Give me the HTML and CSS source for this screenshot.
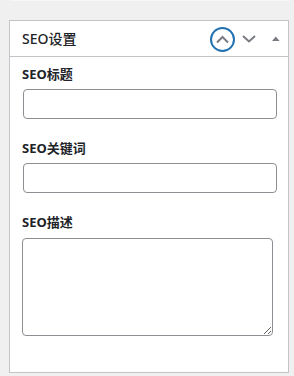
FILE: index.html
```html
<!DOCTYPE html>
<html lang="zh-CN">
<head>
<meta charset="utf-8">
<title>SEO设置</title>
<link rel="stylesheet" href="styles.css">
</head>
<body>
<div class="strip"></div>
<div class="postbox">
  <div class="postbox-header">
    <h2 class="hndle">SEO设置</h2>
    <div class="handle-actions">
      <button class="handle-btn" type="button" aria-label="上移">
        <svg width="26" height="35" viewBox="0 0 26 35"><circle cx="12.5" cy="18.5" r="11.5" fill="none" stroke="#2271b1" stroke-width="2"/><polyline points="7,21.5 12.5,16 18,21.5" fill="none" stroke="#787c82" stroke-width="2"/></svg>
      </button>
      <button class="handle-btn" type="button" aria-label="下移">
        <svg width="26" height="35" viewBox="0 0 26 35"><polyline points="7,15 13,20.5 19,15" fill="none" stroke="#787c82" stroke-width="2"/></svg>
      </button>
      <button class="handle-btn" type="button" aria-label="折叠">
        <svg width="26" height="35" viewBox="0 0 26 35"><polygon points="10,20 13.8,15.5 17.6,20" fill="#787c82"/></svg>
      </button>
    </div>
  </div>
  <div class="inside">
    <div class="field">
      <label class="field-label" for="seo-title">SEO标题</label>
      <input class="field-input" id="seo-title" type="text">
    </div>
    <div class="field">
      <label class="field-label" for="seo-keywords">SEO关键词</label>
      <input class="field-input" id="seo-keywords" type="text">
    </div>
    <div class="field">
      <label class="field-label" for="seo-desc">SEO描述</label>
      <textarea class="field-textarea" id="seo-desc"></textarea>
    </div>
  </div>
</div>
</body>
</html>
```

FILE: styles.css
```css
html, body {
  margin: 0;
  padding: 0;
}
body {
  background: #f0f0f1;
  font-family: "Noto Sans", "Noto Sans CJK SC", sans-serif;
  color: #1d2327;
}
.strip {
  margin-left: 10px;
  width: 280px;
  height: 1px;
  background: #f7f7f7;
}
.postbox {
  margin: 19px 0 0 9px;
  width: 278px;
  height: 351px;
  border: 1px solid #c3c4c7;
  background: #fff;
}
.postbox-header {
  height: 35px;
  border-bottom: 1px solid #c3c4c7;
  display: flex;
  align-items: center;
  justify-content: space-between;
}
.hndle {
  margin: 0;
  padding-left: 12px;
  font-size: 14px;
  font-weight: 500;
  line-height: 20px;
  color: #1d2327;
}
.handle-actions {
  display: flex;
  height: 35px;
}
.handle-btn {
  width: 26px;
  height: 35px;
  padding: 0;
  margin: 0;
  border: 0;
  background: transparent;
  display: block;
}
.handle-btn svg {
  display: block;
}
.inside {
  padding-top: 8px;
}
.field {
  margin-bottom: 20px;
}
.field-label {
  display: block;
  margin-left: 12px;
  font-size: 13px;
  font-weight: 700;
  line-height: 18px;
}
.field-input {
  display: block;
  box-sizing: border-box;
  margin: 6px 0 0 13px;
  width: 254px;
  height: 30px;
  border: 1px solid #8c8f94;
  border-radius: 4px;
  background: #fff;
  padding: 0 8px;
}
.field-textarea {
  display: block;
  box-sizing: border-box;
  margin: 7px 0 0 12px;
  width: 251px;
  height: 98px;
  border: 1px solid #8c8f94;
  border-radius: 4px;
  background: #fff;
  padding: 2px 6px;
}
```
